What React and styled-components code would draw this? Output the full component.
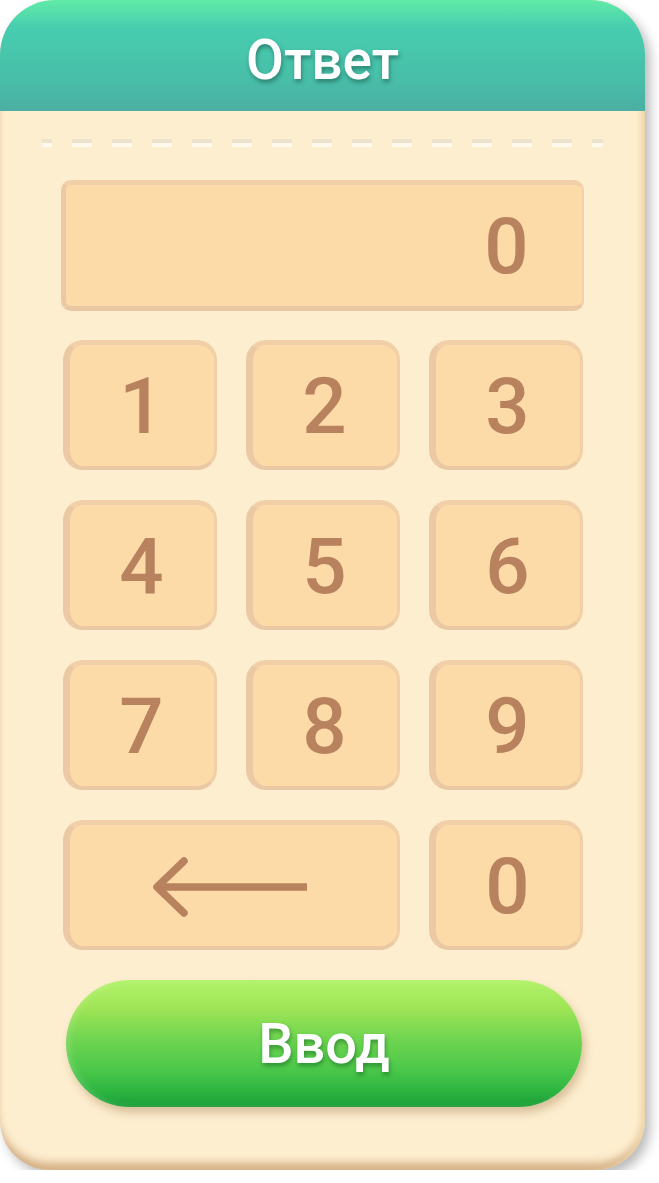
import React from "react";
import styled, { createGlobalStyle } from "styled-components";

const Global = createGlobalStyle`
  html, body {
    margin: 0;
    padding: 0;
    background: #ffffff;
    font-family: Roboto, "Noto Sans", sans-serif;
  }
`;

const Card = styled.div`
  width: 645px;
  height: 1170px;
  border-radius: 55px 55px 50px 50px;
  background: #fdeecf;
  box-shadow: inset -7px 0 6px -3px #efd6ac, inset 0 -10px 8px -3px #d3ae84,
    5px 6px 12px rgba(0, 0, 0, 0.28);
  overflow: hidden;
  display: flex;
  flex-direction: column;
`;

const Header = styled.div`
  height: 111px;
  box-sizing: border-box;
  padding-top: 9px;
  flex-shrink: 0;
  background: linear-gradient(to bottom, #61eba7 0%, #47cdb0 25%, #48bfa8 70%, #4bafa3 100%);
  display: flex;
  align-items: center;
  justify-content: center;
  color: #ffffff;
  font-size: 55px;
  font-weight: 500;
  text-shadow: 1px 3px 4px rgba(20, 80, 70, 0.55);
`;

const Body = styled.div`
  display: flex;
  flex-direction: column;
  align-items: center;
`;

const Dashes = styled.div`
  margin-top: 28px;
  width: 561px;
  height: 8px;
  background: repeating-linear-gradient(
      to right,
      transparent 0 10px,
      #fdeecf 10px 30px,
      transparent 30px 40px
    ),
    linear-gradient(to bottom, #ede2cb 50%, #fff8ec 50%);
`;

const Pad = styled.div`
  margin-top: 33px;
  width: 520px;
  display: grid;
  grid-template-columns: repeat(3, 1fr);
  column-gap: 29px;
  row-gap: 30px;
`;

const Key = styled.div`
  grid-column: span ${(p) => p.$span || 1};
  height: 130px;
  box-sizing: border-box;
  border-radius: 20px;
  border-style: solid;
  border-color: #f1cfa8 #f1d0a8 #eac8a4 #ebc9a5;
  border-width: 5px 3px 4px 7px;
  background: #fcdba8;
  display: flex;
  align-items: center;
  justify-content: center;
  color: #b9825f;
  font-size: 78px;
  font-weight: 500;
  line-height: 1;
  padding-top: 2px;
`;

const Display = styled(Key)`
  grid-column: 1 / -1;
  height: 131px;
  margin: 0 -1px 0 -2px;
  border-radius: 10px;
  justify-content: flex-end;
  padding-right: 53px;
  border-width: 5px 2px 5px 5px;
  margin-bottom: -1px;
`;

const Enter = styled.div`
  margin-top: 30px;
  margin-left: 3px;
  width: 516px;
  height: 127px;
  border-radius: 64px;
  background: linear-gradient(
    to bottom,
    #b2f26b 0%,
    #9fe556 22%,
    #72d650 45%,
    #4cc84a 70%,
    #2cb440 88%,
    #1a9d37 100%
  );
  box-shadow: 3px 6px 8px rgba(150, 110, 60, 0.35),
    inset 4px 0 6px rgba(255, 255, 255, 0.15);
  display: flex;
  align-items: center;
  justify-content: center;
  color: #ffffff;
  font-size: 56px;
  font-weight: 500;
  text-shadow: 1px 3px 4px rgba(10, 90, 30, 0.5);
`;

const Arrow = () => (
  <svg width="160" height="64" viewBox="0 0 160 64" style={{ marginLeft: -4 }}>
    <g fill="none" stroke="#b9825f" strokeWidth="7.5">
      <line x1="6" y1="32" x2="156" y2="32" strokeLinecap="butt" />
      <polyline
        points="33,6 6,32 33,58"
        strokeLinecap="round"
        strokeLinejoin="round"
      />
    </g>
  </svg>
);

const digits = ["1", "2", "3", "4", "5", "6", "7", "8", "9"];

export default function App() {
  return (
    <>
      <Global />
      <Card>
        <Header>Ответ</Header>
        <Body>
          <Dashes />
          <Pad>
            <Display>0</Display>
            {digits.map((d) => (
              <Key key={d}>{d}</Key>
            ))}
            <Key $span={2}>
              <Arrow />
            </Key>
            <Key>0</Key>
          </Pad>
          <Enter>Ввод</Enter>
        </Body>
      </Card>
    </>
  );
}
